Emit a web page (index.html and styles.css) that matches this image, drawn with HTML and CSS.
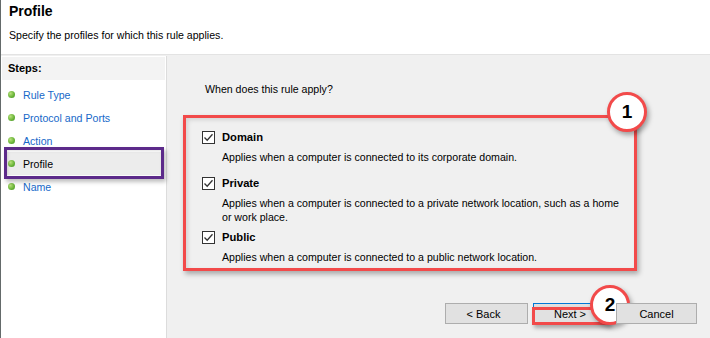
FILE: index.html
```html
<!DOCTYPE html>
<html>
<head>
<meta charset="utf-8">
<link rel="stylesheet" href="styles.css">
</head>
<body>
<div class="window">
  <header class="header">
    <h1 class="title">Profile</h1>
    <p class="subtitle">Specify the profiles for which this rule applies.</p>
  </header>
  <div class="main">
    <aside class="steps">
      <div class="steps-head">Steps:</div>
      <ul class="step-list">
        <li class="step"><span class="dot"></span><span class="step-link">Rule Type</span></li>
        <li class="step"><span class="dot"></span><span class="step-link">Protocol and Ports</span></li>
        <li class="step"><span class="dot"></span><span class="step-link">Action</span></li>
        <li class="step current"><span class="dot"></span><span class="step-cur">Profile</span></li>
        <li class="step"><span class="dot"></span><span class="step-link">Name</span></li>
      </ul>
      <div class="purple-mark"></div>
    </aside>
    <section class="content">
      <p class="question">When does this rule apply?</p>
      <div class="options">
        <div class="option opt-domain">
          <label class="opt-label"><span class="check"><svg viewBox="0 0 13 13" width="13" height="13"><path d="M2.5 6.5 L5.2 9.3 L10.5 3.2" fill="none" stroke="#333" stroke-width="1.3"/></svg></span>Domain</label>
          <p class="opt-desc">Applies when a computer is connected to its corporate domain.</p>
        </div>
        <div class="option opt-private">
          <label class="opt-label"><span class="check"><svg viewBox="0 0 13 13" width="13" height="13"><path d="M2.5 6.5 L5.2 9.3 L10.5 3.2" fill="none" stroke="#333" stroke-width="1.3"/></svg></span>Private</label>
          <p class="opt-desc">Applies when a computer is connected to a private network location, such as a home<br>or work place.</p>
        </div>
        <div class="option opt-public">
          <label class="opt-label"><span class="check"><svg viewBox="0 0 13 13" width="13" height="13"><path d="M2.5 6.5 L5.2 9.3 L10.5 3.2" fill="none" stroke="#333" stroke-width="1.3"/></svg></span>Public</label>
          <p class="opt-desc">Applies when a computer is connected to a public network location.</p>
        </div>
        <div class="badge badge-1">1</div>
      </div>
      <div class="buttons">
        <button class="btn">&lt; Back</button>
        <button class="btn btn-default">Next &gt;<span class="red-mark"></span><span class="badge badge-2">2</span></button>
        <button class="btn btn-cancel">Cancel</button>
      </div>
    </section>
  </div>
</div>
</body>
</html>
```

FILE: styles.css
```css
* { box-sizing: border-box; }
html, body { margin: 0; padding: 0; }
body {
  width: 710px;
  height: 338px;
  overflow: hidden;
  background: #f0f0f0;
  font-family: "Liberation Sans", Arial, sans-serif;
  font-size: 10.6px;
  color: #000;
}
.window {
  width: 710px;
  height: 338px;
  border-left: 1px solid #646a6a;
  display: flex;
  flex-direction: column;
}
.header {
  height: 55px;
  background: #fff;
  border-bottom: 1px solid #e3e3e3;
  padding: 2px 0 0 8px;
  flex: none;
}
.title {
  margin: 0;
  font-size: 14px;
  font-weight: bold;
  line-height: 18px;
}
.subtitle {
  margin: 8px 0 0 0;
  line-height: 14px;
  white-space: nowrap;
}
.main {
  flex: 1;
  display: flex;
  padding-top: 1px;
}
.steps {
  position: relative;
  width: 166px;
  flex: none;
  background: #fff;
  border-right: 1px solid #dcdcdc;
  padding: 1px 0 0 1px;
}
.steps-head {
  height: 23px;
  margin-right: 1px;
  background: #f3f3f3;
  font-weight: bold;
  font-size: 11px;
  padding: 4px 0 0 6px;
  line-height: 14px;
}
.step-list {
  list-style: none;
  margin: 0;
  padding: 3px 0 0 6px;
}
.step {
  height: 23px;
  display: flex;
  align-items: center;
  gap: 8px;
}
.step.current {
  background: #ececec;
  margin-left: -4px;
  padding-left: 4px;
  margin-right: 3px;
}
.dot {
  width: 7px;
  height: 7px;
  border-radius: 50%;
  background: radial-gradient(circle at 35% 35%, #b8e07c 0%, #6cb63a 55%, #3f8a22 100%);
  flex: none;
}
.step-link { color: #1668c9; }
.step-cur { color: #000; }
.purple-mark {
  position: absolute;
  left: 3px;
  top: 91px;
  width: 160px;
  height: 32px;
  border: 3px solid #5c2a8a;
  box-shadow: 2px 3px 4px rgba(0,0,0,0.25), inset 1px 1px 3px rgba(0,0,0,0.12);
}
.content {
  flex: 1;
  padding: 26px 0 0 16px;
  display: flex;
  flex-direction: column;
}
.question {
  margin: 0 0 0 22px;
  line-height: 14px;
}
.options {
  position: relative;
  margin-top: 19px;
  width: 454px;
  height: 156px;
  border: 3px solid #f24a4a;
  box-shadow: 2px 3px 5px rgba(0,0,0,0.3), inset 2px 2px 4px rgba(0,0,0,0.12);
  padding: 0 0 0 16px;
}
.option { display: flex; flex-direction: column; }
.opt-domain { margin-top: 11px; }
.opt-private { margin-top: 11px; }
.opt-public { margin-top: 5px; }
.opt-label {
  display: flex;
  align-items: center;
  height: 16px;
  font-weight: bold;
  font-size: 11.2px;
  gap: 7px;
}
.check {
  width: 13px;
  height: 13px;
  border: 1px solid #333;
  background: #fff;
  display: flex;
  flex: none;
}
.check svg { margin: -1px; }
.opt-desc {
  margin: 5px 0 0 20px;
  line-height: 14px;
  white-space: nowrap;
}
.badge {
  position: absolute;
  width: 40px;
  height: 40px;
  border-radius: 50%;
  background: #fff;
  border: 3px solid #f24a4a;
  box-shadow: 2px 3px 5px rgba(0,0,0,0.35);
  font-weight: bold;
  font-size: 19px;
  color: #000;
  display: flex;
  align-items: center;
  justify-content: center;
  font-family: "Liberation Sans", Arial, sans-serif;
}
.badge-1 { right: -13px; top: -26px; }
.buttons {
  margin-top: 32px;
  padding-left: 262px;
  display: flex;
  gap: 5px;
}
.btn {
  position: relative;
  width: 83px;
  height: 21px;
  background: #e1e1e1;
  border: 1px solid #adadad;
  font-family: "Liberation Sans", Arial, sans-serif;
  font-size: 11px;
  color: #000;
  padding: 0 6px 0 0;
}
.btn-default {
  width: 80px;
  border-color: #0078d7;
}
.btn-cancel { width: 81px; margin-left: -2px; padding: 0; }
.red-mark {
  position: absolute;
  left: -2px;
  top: 3px;
  width: 78px;
  height: 18px;
  border: 3px solid #f24a4a;
  box-shadow: 2px 3px 4px rgba(0,0,0,0.3);
}
.badge-2 { left: 56px; top: -19px; }
```
